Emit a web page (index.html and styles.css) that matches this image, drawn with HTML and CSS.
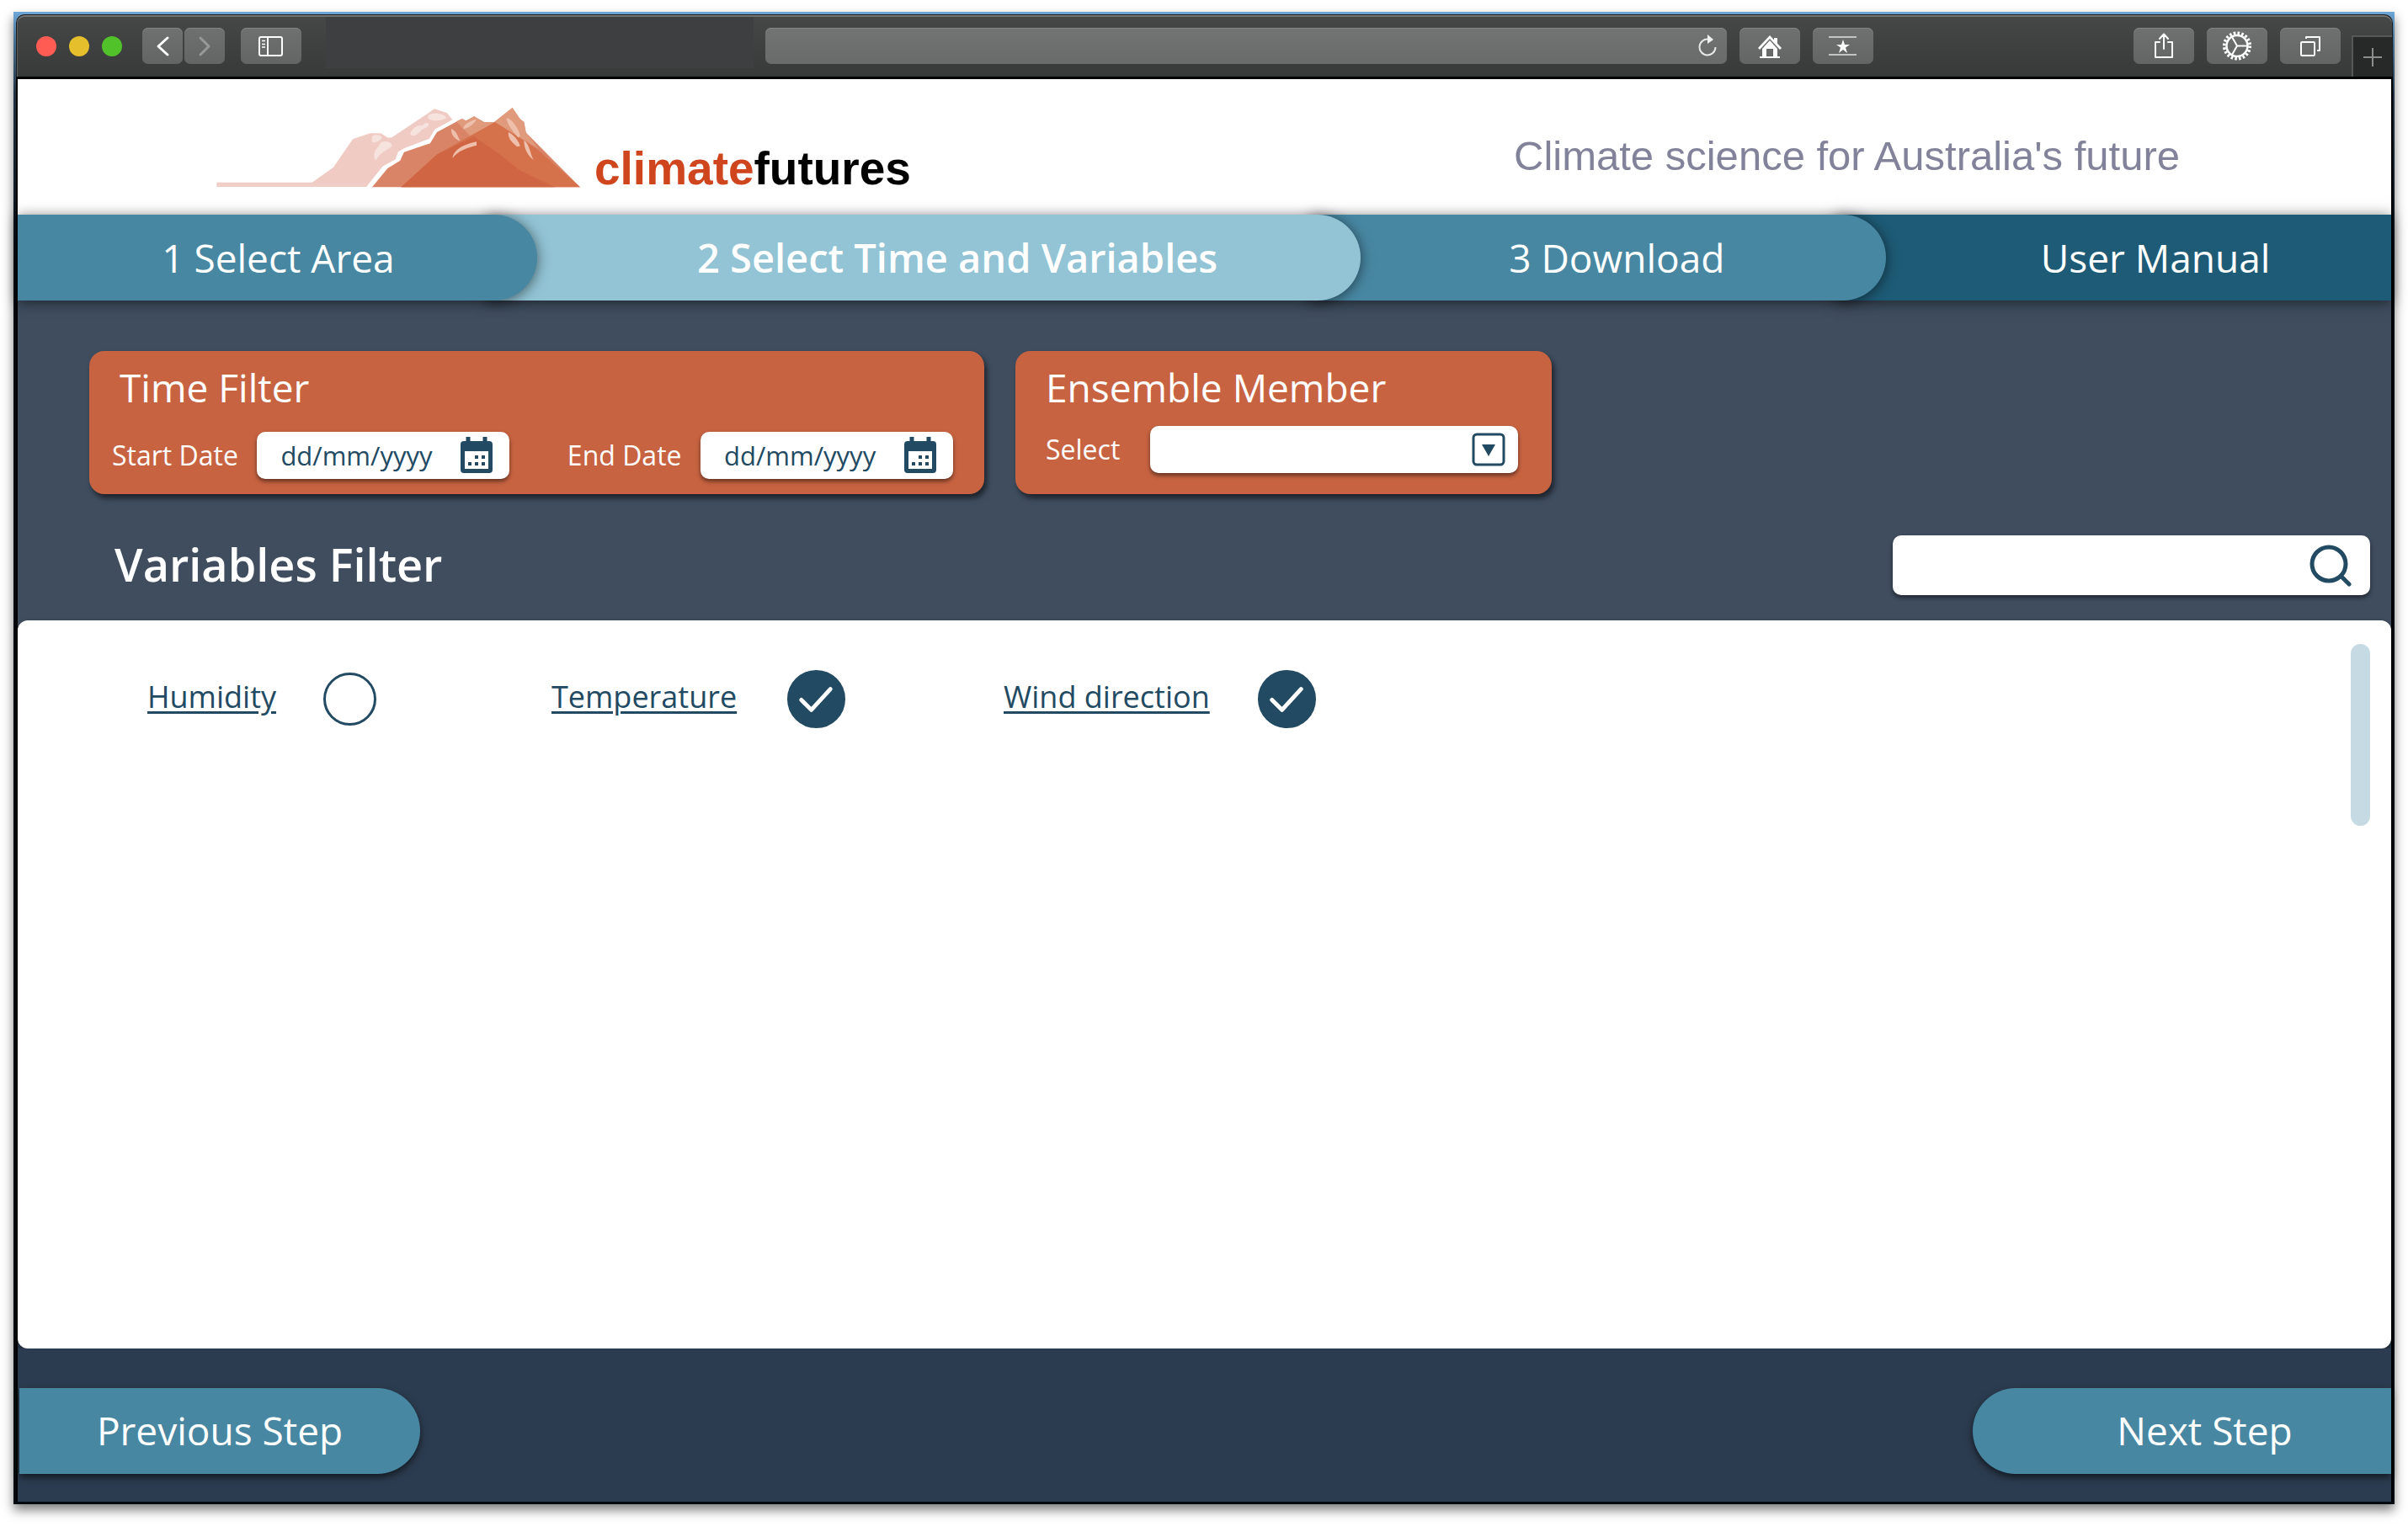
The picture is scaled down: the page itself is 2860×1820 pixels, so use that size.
FILE: index.html
```html
<!DOCTYPE html>
<html lang="en">
<head>
<meta charset="utf-8">
<meta name="viewport" content="width=device-width, initial-scale=1">
<title>Climate Futures – Select Time and Variables</title>
<link rel="stylesheet" href="styles.css">
</head>
<body>
<div class="window">
  <div class="toolbar">
    <div class="lights">
      <span class="light light-close"></span>
      <span class="light light-minimise"></span>
      <span class="light light-zoom"></span>
    </div>
    <div class="history">
      <button class="tool tool-small" type="button" aria-label="Back">
        <svg width="48" height="43" viewBox="0 0 48 43"><path d="M30 12L19 22L30 32" fill="none" stroke="#fff" stroke-width="3" stroke-linecap="round" stroke-linejoin="round"/></svg>
      </button>
      <button class="tool tool-small" type="button" aria-label="Forward">
        <svg width="48" height="43" viewBox="0 0 48 43"><path d="M19 12L29 22L19 32" fill="none" stroke="#979898" stroke-width="3" stroke-linecap="round" stroke-linejoin="round"/></svg>
      </button>
    </div>
    <button class="tool" type="button" aria-label="Show sidebar">
      <svg width="72" height="43" viewBox="0 0 72 43" fill="none" stroke="#fff"><rect x="22" y="11" width="27" height="22" rx="2" stroke-width="2"/><path d="M32 11V33" stroke-width="2"/><path d="M25 15.500H29M25 19.500H29M25 23H29" stroke-width="1.500"/></svg>
    </button>
    <div class="tab-title"></div>
    <div class="address">
      <input class="address-input" type="text" aria-label="Address">
      <button class="reload" type="button" aria-label="Reload">
        <svg width="24" height="28" viewBox="0 0 24 28"><path d="M13 5.500A9.500 9.500 0 1 0 21.500 15" fill="none" stroke="#e8e8e8" stroke-width="2"/><path d="M12 0L19 6L12 11Z" fill="#f2f2f2"/></svg>
      </button>
    </div>
    <button class="tool" type="button" aria-label="Home">
      <svg width="72" height="43" viewBox="0 0 72 43"><path d="M22 24L36 9L50 24L48 26L36 13L24 26Z" fill="#fff"/><path d="M41 12H45V20L41 16Z" fill="#fff"/><path fill-rule="evenodd" d="M36 15L45 25V34H48V36H24V34H27V25ZM32 25V34H40V25Z" fill="#fff"/></svg>
    </button>
    <button class="tool" type="button" aria-label="Favourites">
      <svg width="72" height="43" viewBox="0 0 72 43"><path d="M19 11H52M19 32H52" stroke="#c4c4c4" stroke-width="2"/><path d="M36 14L38 20H44L39 23.500L41 30L36 26L31 30L33 23.500L28 20H34Z" fill="#fff"/></svg>
    </button>
    <div class="toolbar-space"></div>
    <button class="tool" type="button" aria-label="Share">
      <svg width="72" height="43" viewBox="0 0 72 43" fill="none" stroke="#fff" stroke-width="2" stroke-linecap="round" stroke-linejoin="round"><path d="M31 17H26V35H46V17H41M36 25V8M31 13L36 7.500L41 13"/></svg>
    </button>
    <button class="tool" type="button" aria-label="Settings">
      <svg width="72" height="43" viewBox="0 0 72 43" fill="none" stroke="#fff"><circle cx="36" cy="21.500" r="12.500" stroke-width="2.500"/><circle cx="36" cy="21.500" r="15.300" stroke-width="3.600" stroke-dasharray="2.600 2.207"/><path d="M36 21.500H48M36 21.500L30 11M36 21.500L30 32" stroke-width="2"/></svg>
    </button>
    <button class="tool" type="button" aria-label="Show tabs">
      <svg width="72" height="43" viewBox="0 0 72 43" fill="none" stroke="#fff" stroke-width="2" stroke-linejoin="round"><rect x="25" y="17" width="16" height="16" rx="1"/><path d="M31 13V11H47V27H44"/></svg>
    </button>
    <button class="new-tab" type="button" aria-label="New tab">
      <svg width="24" height="24" viewBox="0 0 24 24"><path d="M12 1V23M1 12H23" stroke="#8d8d8d" stroke-width="2"/></svg>
    </button>
  </div>

  <div class="page">
    <header class="header">
      <div class="brand">
        <svg class="mountain" viewBox="64 80 752 277" preserveAspectRatio="none" aria-hidden="true">
          <path d="M65 350H262L306 296L346 195L382 174H404L418 190H426L515 87L541 102L552 126L516 160L504 194L452 228L440 240L434 268L408 292L374 366H65Z" fill="#efcbc4"/>
          <path d="M65 353H372V363H65Z" fill="#f0cfc8"/>
          <path d="M386 186C390 176 406 180 406 190C404 202 390 212 385 204ZM405 206C416 198 430 208 426 222C414 238 400 246 394 272C388 262 389 240 396 228ZM502 110C508 98 532 100 540 118C534 130 512 134 502 122ZM465 176C466 162 480 140 490 148C494 134 504 134 503 146C496 160 488 158 484 170C476 184 468 188 465 176Z" fill="#f6e3de"/>
          <path d="M386 367L418 300L444 272L452 242L506 210L520 170L572 122L580 130L597 114L618 135H638L676 83L692 124L700 134L704 172L816 367Z" fill="#da8467"/>
          <path d="M560 132L572 122L580 130L597 114L618 135H638L676 83L692 124L700 134L704 172L730 230L640 136L590 186Z" fill="#e09a7c"/>
          <path d="M446 367L520 250L640 134L726 230L816 367Z" fill="#d5714b"/>
          <path d="M446 367L520 250L596 186L650 250L690 306L764 367Z" fill="#d06543"/>
          <path d="M664 120C674 120 690 160 692 184L688 190C678 170 664 140 664 120ZM668 170C678 180 688 196 692 220L686 222C674 206 666 190 668 170ZM700 200C712 214 712 246 720 270C708 256 700 230 700 200ZM574 160C576 140 590 130 602 124C598 140 586 156 574 160ZM550 158C560 166 562 180 568 202C556 194 548 178 550 158ZM552 264C554 236 570 216 602 204V218C584 226 564 236 552 264Z" fill="#eebfaa"/>
        </svg>
        <span class="wordmark"><span class="wordmark-climate">climate</span>futures</span>
      </div>
      <p class="tagline">Climate science for Australia's future</p>
    </header>

    <nav class="steps">
      <a class="step step-area" href="#area">1 Select Area</a>
      <a class="step step-time" href="#time" aria-current="step">2 Select Time and Variables</a>
      <a class="step step-download" href="#download">3 Download</a>
      <a class="step step-manual" href="#manual">User Manual</a>
    </nav>

    <main class="main">
      <section class="filters">
        <div class="card card-time">
          <h2 class="card-title">Time Filter</h2>
          <div class="fields">
            <label class="label" for="start">Start Date</label>
            <div class="date">
              <input class="date-input" id="start" type="text" placeholder="dd/mm/yyyy">
              <svg class="calendar" viewBox="0 0 40 46" aria-hidden="true"><path d="M10 1V10M30 1V10" stroke="#224a62" stroke-width="5"/><path fill-rule="evenodd" d="M5 6H35Q39 6 39 10V40Q39 44 35 44H5Q1 44 1 40V10Q1 6 5 6ZM6 18V39H34V18Z" fill="#224a62"/><path d="M18 23H22V27H18ZM26 23H30V27H26ZM10 31H14V35H10ZM18 31H22V35H18ZM26 31H30V35H26Z" fill="#224a62"/></svg>
            </div>
            <label class="label label-end" for="end">End Date</label>
            <div class="date">
              <input class="date-input" id="end" type="text" placeholder="dd/mm/yyyy">
              <svg class="calendar" viewBox="0 0 40 46" aria-hidden="true"><path d="M10 1V10M30 1V10" stroke="#224a62" stroke-width="5"/><path fill-rule="evenodd" d="M5 6H35Q39 6 39 10V40Q39 44 35 44H5Q1 44 1 40V10Q1 6 5 6ZM6 18V39H34V18Z" fill="#224a62"/><path d="M18 23H22V27H18ZM26 23H30V27H26ZM10 31H14V35H10ZM18 31H22V35H18ZM26 31H30V35H26Z" fill="#224a62"/></svg>
            </div>
          </div>
        </div>
        <div class="card card-member">
          <h2 class="card-title">Ensemble Member</h2>
          <div class="fields">
            <label class="label" for="member">Select</label>
            <div class="picker">
              <select class="picker-select" id="member"><option value=""></option></select>
              <svg class="picker-arrow" viewBox="0 0 40 40" aria-hidden="true"><rect x="2" y="2" width="36" height="36" rx="4" fill="none" stroke="#224a62" stroke-width="3"/><path d="M12 14H28L20 28Z" fill="#224a62"/></svg>
            </div>
          </div>
        </div>
      </section>

      <section class="variables-bar">
        <h1 class="variables-title">Variables Filter</h1>
        <div class="search">
          <input class="search-input" type="search" aria-label="Search variables">
          <svg class="search-icon" viewBox="0 0 50 50" aria-hidden="true" fill="none" stroke="#224a62" stroke-width="5" stroke-linecap="round"><circle cx="23" cy="23" r="20"/><path d="M38 38L47 47"/></svg>
        </div>
      </section>

      <div class="panel-area">
        <section class="panel">
          <div class="variables">
            <label class="variable"><a class="variable-link" href="#humidity">Humidity</a>
              <span class="tick"><input class="tick-box" type="checkbox"></span></label>
            <label class="variable"><a class="variable-link" href="#temperature">Temperature</a>
              <span class="tick"><input class="tick-box" type="checkbox" checked><svg class="tick-mark" viewBox="0 0 70 70" aria-hidden="true"><path d="M17 36L29 48L52 23" fill="none" stroke="#fff" stroke-width="5" stroke-linecap="round" stroke-linejoin="round"/></svg></span></label>
            <label class="variable"><a class="variable-link" href="#wind">Wind direction</a>
              <span class="tick"><input class="tick-box" type="checkbox" checked><svg class="tick-mark" viewBox="0 0 70 70" aria-hidden="true"><path d="M17 36L29 48L52 23" fill="none" stroke="#fff" stroke-width="5" stroke-linecap="round" stroke-linejoin="round"/></svg></span></label>
          </div>
          <div class="scroll-thumb"></div>
        </section>
      </div>
    </main>

    <footer class="footer">
      <button class="move move-previous" type="button">Previous Step</button>
      <button class="move move-next" type="button">Next Step</button>
    </footer>
  </div>
</div>
</body>
</html>
```
FILE: styles.css
```css
* { box-sizing: border-box; }

body {
  margin: 0;
  min-height: 100vh;
  padding: 14px 16px 33px;
  display: flex;
  background: #fff;
  color: #fff;
  font-family: "Trebuchet MS", "Open Sans", "Noto Sans", sans-serif;
}

h1, h2, p { margin: 0; font-weight: 400; }
a { color: inherit; }
svg { display: block; flex: none; }
button, input, select { font: inherit; color: inherit; border: 0; margin: 0; padding: 0; }
button { cursor: pointer; }
input, select { outline: 0; background: transparent; min-width: 0; }

/* Browser window */
.window {
  flex: 1;
  display: flex;
  flex-direction: column;
  padding: 3px 2px 3px 3px;
  background: linear-gradient(#6ea6d6, #4d7698 30px, #1d2f40 100px, #03090f 300px);
  box-shadow: 0 7px 12px rgba(0, 0, 0, 0.5);
}

.toolbar {
  display: flex;
  align-items: center;
  height: 74px;
  padding: 0 0 0 23px;
  background: linear-gradient(#464747, #383939);
  border: 1px solid #1b1e20;
  border-bottom: 0;
  border-radius: 10px 10px 0 0;
  box-shadow: inset 0 2px 0 #737474, inset 1px 0 0 #5c5d5d;
}

.lights { display: flex; gap: 15px; margin-right: 24px; }
.light { width: 24px; height: 24px; border-radius: 50%; }
.light-close { background: #ff5c54; }
.light-minimise { background: #e6bf2c; }
.light-zoom { background: #52c22b; }

.history { display: flex; gap: 2px; margin-right: 19px; }

.tool {
  flex: none;
  width: 72px;
  height: 43px;
  border-radius: 7px;
  background: linear-gradient(#6f7070, #636464);
  box-shadow: inset 0 1px 0 #838484;
}
.tool + .tool { margin-left: 15px; }
.tool.tool-small { width: 48px; margin-left: 0; }

.tab-title { width: 508px; height: 61px; margin: 2px 14px 0 29px; background: #3e3f41; align-self: flex-start; }

.address {
  flex: 1;
  display: flex;
  align-items: center;
  height: 43px;
  margin-right: 15px;
  padding-right: 11px;
  border-radius: 7px;
  background: linear-gradient(#727373, #696a6a);
  box-shadow: inset 0 1px 0 #858686;
}
.address-input { flex: 1; height: 43px; padding: 0 16px; font-size: 24px; }
.reload { background: none; }
.toolbar-space { width: 309px; }

.new-tab {
  align-self: flex-end;
  display: grid;
  place-items: center;
  width: 48px;
  height: 49px;
  margin-left: 13px;
  background: #272828;
  border: solid #565757;
  border-width: 2px 0 0 2px;
}

/* Page */
.page {
  flex: 1;
  display: flex;
  flex-direction: column;
  border: solid #000;
  border-width: 3px 2px 0;
}

.header {
  display: flex;
  align-items: flex-start;
  justify-content: space-between;
  height: 161px;
  padding: 33px 251px 0 236px;
  background: #fff;
  font-family: "Liberation Sans", Arial, sans-serif;
}
.brand { display: flex; align-items: baseline; gap: 17px; }
.mountain { width: 432px; height: 92px; overflow: visible; }
.wordmark { font-size: 55px; font-weight: 700; line-height: 64px; color: #000; }
.wordmark-climate { color: #cf451e; }
.tagline { font-size: 49px; line-height: 56px; padding-top: 30px; color: #82829a; }

/* Steps */
.steps {
  display: grid;
  grid-template-columns: 617fr 979fr 624fr 600fr;
  position: relative;
  z-index: 1;
}
.step {
  position: relative;
  display: flex;
  align-items: center;
  justify-content: center;
  height: 102px;
  margin-left: -60px;
  padding-left: 60px;
  border-radius: 0 51px 51px 0;
  font-size: 46px;
  text-decoration: none;
  box-shadow: 0 2px 16px rgba(0, 0, 0, 0.55);
}
.step-area { z-index: 4; margin-left: 0; padding-left: 2px; background: #4887a2; }
.step-time { z-index: 3; padding-left: 80px; background: #92c4d5; font-size: 47px; font-weight: 600; }
.step-download { z-index: 2; padding-left: 44px; background: #4887a2; }
.step-manual { z-index: 1; padding-left: 100px; border-radius: 0; background: #1e5b76; }

/* Filters */
.main { flex: 1; display: flex; flex-direction: column; background: #3f4d5f; }
.filters { display: flex; align-items: flex-start; gap: 37px; padding: 60px 85px 0; }
.card {
  height: 170px;
  padding-top: 15px;
  border-radius: 18px;
  background: #c86341;
  box-shadow: 3px 5px 6px rgba(0, 0, 0, 0.55);
}
.card-time { width: 1063px; padding-left: 27px; padding-right: 37px; }
.card-member { width: 637px; padding-left: 36px; padding-right: 40px; }
.card-title { font-size: 46px; line-height: 56px; }
.card-time .card-title { padding-left: 9px; }
.fields { display: flex; align-items: center; justify-content: space-between; }
.card-time .fields { padding-top: 25px; }
.card-member .fields { padding-top: 18px; }
.label { font-size: 32px; line-height: 56px; }
.label-end { padding-left: 46px; }

.date, .picker, .search {
  display: flex;
  align-items: center;
  border-radius: 10px;
  background: #fff;
  color: #224a62;
  box-shadow: 0 3px 5px rgba(0, 0, 0, 0.5);
}
.date { width: 300px; height: 56px; padding: 0 19px 0 28px; }
.date-input { flex: 1; height: 56px; font-size: 31px; }
.date-input::placeholder { color: #224a62; opacity: 1; }
.calendar { width: 40px; height: 46px; }

.picker { position: relative; width: 437px; height: 56px; }
.picker-select { flex: 1; height: 56px; padding: 0 60px 0 20px; font-size: 31px; appearance: none; }
.picker-arrow { position: absolute; right: 15px; top: 8px; width: 40px; height: 40px; pointer-events: none; }

.variables-bar {
  display: flex;
  align-items: center;
  justify-content: space-between;
  padding: 49px 25px 30px 115px;
}
.variables-title { padding-bottom: 4px; font-size: 54px; line-height: 64px; font-weight: 600; }
.search { width: 567px; height: 71px; padding-right: 22px; }
.search-input { flex: 1; height: 71px; padding-left: 24px; font-size: 36px; appearance: none; }
.search-icon { width: 50px; height: 50px; }

/* Variables */
.panel-area { flex: 1; display: flex; background: linear-gradient(#3f4d5f 50%, #2c3c50 50%); }
.panel {
  flex: 1;
  display: flex;
  justify-content: space-between;
  align-items: flex-start;
  padding: 28px 25px 28px 154px;
  border-radius: 12px;
  background: #fff;
  color: #224a62;
  box-shadow: 0 3px 6px rgba(0, 0, 0, 0.4);
}
.variables {
  display: grid;
  grid-template-columns: 272px 208px 349px 188px 371px;
  padding-top: 30px;
}
.variable { display: flex; align-items: center; justify-content: space-between; height: 70px; }
.variable:nth-child(2) { grid-column: 3; }
.variable:nth-child(3) { grid-column: 5; }
.variable-link { padding-bottom: 4px; font-size: 36px; line-height: 56px; text-decoration-thickness: 3px; text-underline-offset: 4px; }
.tick { position: relative; display: flex; }
.tick-box { width: 63px; height: 63px; border: 3px solid #224a62; border-radius: 50%; appearance: none; }
.tick-box:checked { width: 69px; height: 69px; background: #224a62; }
.tick-mark { position: absolute; inset: 0; pointer-events: none; }
.scroll-thumb { width: 23px; height: 216px; border-radius: 12px; background: #c6dae3; }

/* Footer */
.footer {
  display: flex;
  justify-content: space-between;
  padding: 47px 0 33px 2px;
  background: #2c3c50;
}
.move {
  height: 102px;
  padding-bottom: 3px;
  background: #4887a2;
  color: #fff;
  font-size: 46px;
  box-shadow: 0 4px 10px rgba(0, 0, 0, 0.6);
}
.move-previous { width: 476px; border-radius: 0 51px 51px 0; }
.move-next { width: 497px; padding-left: 54px; border-radius: 51px 0 0 51px; }
```
